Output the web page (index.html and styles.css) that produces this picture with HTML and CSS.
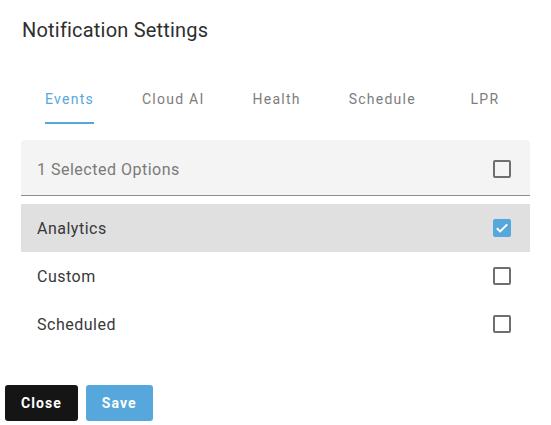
FILE: index.html
```html
<!DOCTYPE html>
<html>
<head>
<meta charset="utf-8">
<link rel="stylesheet" href="styles.css">
</head>
<body>
<div class="dialog">
  <h1 class="title">Notification Settings</h1>
  <nav class="tabs">
    <div class="tab active"><span class="tab-label">Events</span></div>
    <div class="tab"><span class="tab-label">Cloud AI</span></div>
    <div class="tab"><span class="tab-label">Health</span></div>
    <div class="tab"><span class="tab-label">Schedule</span></div>
    <div class="tab"><span class="tab-label">LPR</span></div>
  </nav>
  <div class="panel">
    <div class="panel-header">
      <span class="header-text">1 Selected Options</span>
      <span class="checkbox"></span>
    </div>
    <ul class="options">
      <li class="option selected">
        <span class="option-text">Analytics</span>
        <span class="checkbox checked">
          <svg viewBox="0 0 18 18" width="18" height="18"><path d="M3.8 9.2 L7.2 12.4 L14.2 5.4" fill="none" stroke="#fff" stroke-width="2"/></svg>
        </span>
      </li>
      <li class="option">
        <span class="option-text">Custom</span>
        <span class="checkbox"></span>
      </li>
      <li class="option">
        <span class="option-text">Scheduled</span>
        <span class="checkbox"></span>
      </li>
    </ul>
  </div>
  <div class="actions">
    <button class="btn btn-close">Close</button>
    <button class="btn btn-save">Save</button>
  </div>
</div>
</body>
</html>
```
FILE: styles.css
```css
* { box-sizing: border-box; }
html, body { margin: 0; padding: 0; background: #fff; }
body {
  font-family: Roboto, "Noto Sans", "Liberation Sans", sans-serif;
  color: #333;
  width: 551px;
  height: 425px;
  overflow: hidden;
}
.title {
  margin: 0;
  padding: 18px 22px 0;
  font-size: 20px;
  font-weight: 400;
  line-height: 24px;
  letter-spacing: 0.2px;
  color: #2e2e2e;
}
.tabs {
  display: flex;
  margin-top: 34px;
  padding-left: 21px;
  height: 48px;
}
.tab {
  min-width: 90px;
  padding: 0 24px;
  display: flex;
  justify-content: center;
  font-size: 14px;
  letter-spacing: 1.25px;
  color: #7d7d7d;
}
.tab-label {
  display: block;
  line-height: 46px;
  border-bottom: 2px solid transparent;
}
.tab.active { color: #56a8dc; }
.tab.active .tab-label { border-bottom-color: #56a8dc; }
.panel {
  margin: 16px 21px 0;
}
.panel-header {
  height: 56px;
  background: #f4f4f4;
  border-radius: 4px 4px 0 0;
  border-bottom: 1px solid #8c8c8c;
  display: flex;
  align-items: center;
  justify-content: space-between;
  padding: 3px 16px 0;
}
.header-text {
  font-size: 16px;
  letter-spacing: 0.5px;
  color: #7a7a7a;
}
.checkbox {
  width: 18px;
  height: 18px;
  margin: 3px;
  border: 2px solid #6e6e6e;
  border-radius: 2px;
  display: block;
  position: relative;
}
.checkbox.checked {
  background: #56a8dc;
  border-color: #56a8dc;
}
.checkbox svg {
  position: absolute;
  left: -2px;
  top: -2px;
}
.options {
  list-style: none;
  margin: 0;
  padding: 8px 0 0;
}
.option {
  height: 48px;
  display: flex;
  align-items: center;
  justify-content: space-between;
  padding: 0 16px;
  font-size: 16px;
  letter-spacing: 0.5px;
  color: #383838;
}
.option.selected { background: #e0e0e0; }
.actions {
  display: flex;
  gap: 8px;
  margin-top: 37px;
  padding-left: 5px;
}
.btn {
  height: 36px;
  border: none;
  border-radius: 3px;
  padding: 0 16px;
  font-family: Roboto, "Noto Sans", "Liberation Sans", sans-serif;
  font-size: 14px;
  font-weight: 700;
  letter-spacing: 1.05px;
  color: #fff;
}
.btn-close { background: #151515; }
.btn-save { background: #56a8dc; }
```
